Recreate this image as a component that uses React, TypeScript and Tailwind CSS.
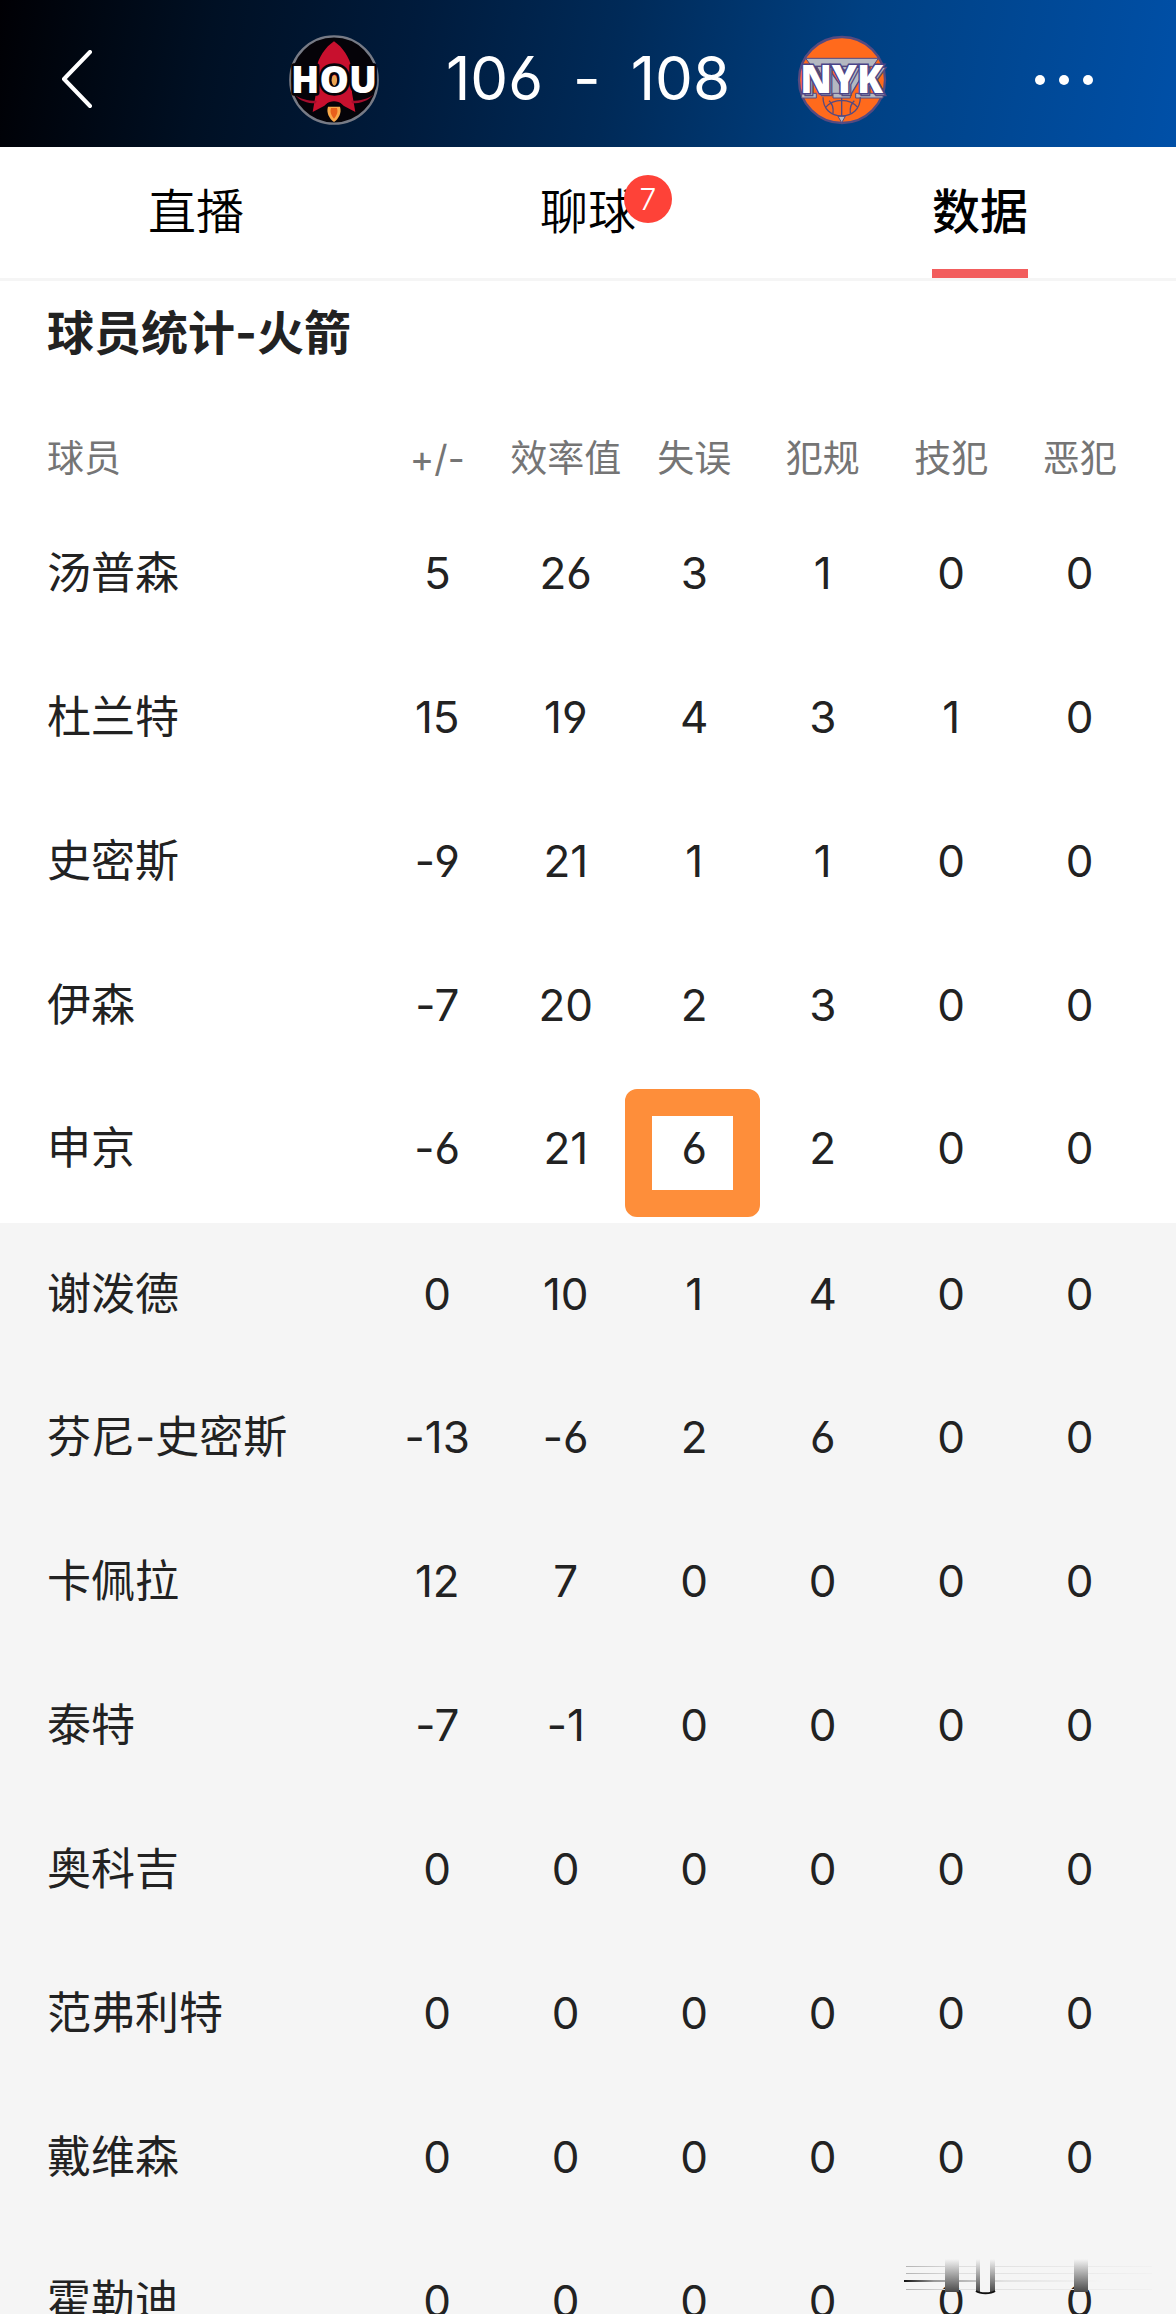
type Player = { name: string; stats: string[] };

const columns = ["+/-", "效率值", "失误", "犯规", "技犯", "恶犯"];

const starters: Player[] = [
  { name: "汤普森", stats: ["5", "26", "3", "1", "0", "0"] },
  { name: "杜兰特", stats: ["15", "19", "4", "3", "1", "0"] },
  { name: "史密斯", stats: ["-9", "21", "1", "1", "0", "0"] },
  { name: "伊森", stats: ["-7", "20", "2", "3", "0", "0"] },
  { name: "申京", stats: ["-6", "21", "6", "2", "0", "0"] },
];

const bench: Player[] = [
  { name: "谢泼德", stats: ["0", "10", "1", "4", "0", "0"] },
  { name: "芬尼-史密斯", stats: ["-13", "-6", "2", "6", "0", "0"] },
  { name: "卡佩拉", stats: ["12", "7", "0", "0", "0", "0"] },
  { name: "泰特", stats: ["-7", "-1", "0", "0", "0", "0"] },
  { name: "奥科吉", stats: ["0", "0", "0", "0", "0", "0"] },
  { name: "范弗利特", stats: ["0", "0", "0", "0", "0", "0"] },
  { name: "戴维森", stats: ["0", "0", "0", "0", "0", "0"] },
  { name: "霍勒迪", stats: ["0", "0", "0", "0", "0", "0"] },
];

function RocketsLogo() {
  return (
    <svg viewBox="54 44 276 276" className="size-[92px]" role="img" aria-label="HOU">
      <circle cx="192" cy="182" r="131" fill="#050308" stroke="#777b86" strokeWidth="7" />
      <path d="M192 66c-26 18-46 46-54 84v70l-10 58 34-18 12-10h36l12 10 34 18-10-58v-70c-8-38-28-66-54-84z" fill="#c8102e" />
      <path d="M74 226c16 12 38 18 66 18l-2 8c-28 0-48-8-64-26zM310 226c-16 12-38 18-66 18l2 8c28 0 48-8 64-26z" fill="#a50d2c" />
      <path d="M166 258c8-10 18-12 26-12s18 2 26 12z" fill="#050308" />
      <path d="M174 262h36c6 18-4 36-18 46-14-10-24-28-18-46z" fill="#f9a94a" />
      <path d="M183 266h18c4 14-2 24-9 32-7-8-13-18-9-32z" fill="#e8601c" />
      <text
        x="192"
        y="222"
        textAnchor="middle"
        fontSize="111"
        fontWeight="800"
        fill="#fff"
        stroke="#050308"
        strokeWidth="16"
        strokeLinejoin="round"
        paintOrder="stroke"
        className="font-['Open_Sans',sans-serif]"
      >
        HOU
      </text>
      <ellipse cx="193" cy="183" rx="8" ry="16" fill="#e9a653" />
    </svg>
  );
}

function KnicksLogo() {
  return (
    <svg viewBox="49 42 276 276" className="size-[92px]" role="img" aria-label="NYK">
      <circle cx="187" cy="180" r="129" fill="#ff6a1c" stroke="#554a80" strokeWidth="7" />
      <path d="M78 115h218l-16 24H96z" fill="#b4b8c1" stroke="#554a80" strokeWidth="3" />
      <path d="M110 139h154l-50 84h-56z" fill="#b4b8c1" stroke="#554a80" strokeWidth="4" />
      <path d="M150 150l36 52 36-52z" fill="#ff6a1c" stroke="#554a80" strokeWidth="4" />
      <path d="M66 220h44v14H66zM160 220h52v14h-52zM228 220h82v14h-82z" fill="#b4b8c1" stroke="#554a80" strokeWidth="3" />
      <g fill="none" stroke="#554a80" strokeWidth="4">
        <path d="M130 232c0 36 24 54 56 56 32-2 56-20 56-56" />
        <path d="M186 234v54M138 262c24-28 72-28 96 0M160 280c2-18 0-28-12-38M212 280c-2-18 0-28 12-38" />
      </g>
      <path d="M175 289h22l-11 19z" fill="#b4b8c1" stroke="#554a80" strokeWidth="3" />
      <text
        x="192"
        y="224"
        textAnchor="middle"
        fontSize="112"
        fontWeight="800"
        fill="#b4b8c1"
        stroke="#554a80"
        strokeWidth="8"
        paintOrder="stroke"
        aria-hidden="true"
        className="font-['Open_Sans',sans-serif]"
      >
        NYK
      </text>
      <text
        x="186"
        y="219"
        textAnchor="middle"
        fontSize="114"
        fontWeight="800"
        fill="#fff"
        stroke="#4a4488"
        strokeWidth="9"
        paintOrder="stroke"
        className="font-['Open_Sans',sans-serif]"
      >
        NYK
      </text>
    </svg>
  );
}

function Smudge() {
  return (
    <svg viewBox="0 0 250 38" className="absolute right-[22px] bottom-5 h-[38px] w-[250px]" aria-hidden="true">
      <defs>
        <linearGradient id="fadeDown" x1="0" y1="0" x2="0" y2="1">
          <stop offset="0" stopColor="#f5f5f5" />
          <stop offset="0.4" stopColor="#b0b0b0" />
          <stop offset="1" stopColor="#4a4a4a" />
        </linearGradient>
        <linearGradient id="fadeRight" x1="0" y1="0" x2="1" y2="0">
          <stop offset="0" stopColor="#111" />
          <stop offset="0.15" stopColor="#999" />
          <stop offset="0.5" stopColor="#e2e2e2" />
          <stop offset="1" stopColor="#f5f5f5" />
        </linearGradient>
        <linearGradient id="fadeRightSoft" x1="0" y1="0" x2="1" y2="0">
          <stop offset="0" stopColor="#b4b4b4" />
          <stop offset="0.2" stopColor="#dedede" />
          <stop offset="1" stopColor="#f1f1f1" />
        </linearGradient>
      </defs>
      <rect x="2" y="8" width="246" height="1" fill="url(#fadeRightSoft)" />
      <rect x="2" y="15" width="246" height="1" fill="url(#fadeRightSoft)" />
      <rect x="0" y="22" width="200" height="2" fill="url(#fadeRight)" />
      <rect x="2" y="31" width="246" height="1" fill="url(#fadeRightSoft)" />
      <rect x="41" y="1" width="14" height="33" fill="url(#fadeDown)" />
      <rect x="170" y="1" width="14" height="33" fill="url(#fadeDown)" />
      <rect x="72" y="1" width="4" height="33" fill="url(#fadeDown)" />
      <rect x="86" y="1" width="5" height="33" fill="url(#fadeDown)" />
      <rect x="76" y="1" width="10" height="33" fill="#f5f5f5" />
      <path d="M72 33c4 3 15 3 19 0" fill="none" stroke="#111" strokeWidth="2" />
    </svg>
  );
}

function PlayerRow({ player, marked }: { player: Player; marked?: number }) {
  return (
    <tr className="h-36">
      <th scope="row" className="pl-[47px] text-left font-normal whitespace-nowrap">
        {player.name}
      </th>
      {player.stats.map((value, i) => (
        <td key={columns[i]} className="relative text-center">
          {value}
          {marked === i && (
            <span className="absolute top-3 -left-[5px] h-32 w-[135px] rounded-xl border-[27px] border-[#fe8e3a]" />
          )}
        </td>
      ))}
      <td />
    </tr>
  );
}

export default function App() {
  return (
    <div
      lang="zh-CN"
      className="relative flex h-screen flex-col overflow-hidden bg-white pb-0.5 font-[Inter,'Noto_Sans_CJK_SC',sans-serif] text-[#222] [font-feature-settings:'cv03','cv04','calt'_0]"
    >
      <header className="grid h-[147px] shrink-0 grid-cols-[1fr_auto_1fr] items-center bg-[linear-gradient(100deg,#000004_0%,#001024_18%,#001b3c_35%,#002a58_52%,#004082_72%,#0050a8_100%)] pt-3 text-white">
        <button type="button" aria-label="返回" className="ml-[60px] w-fit">
          <svg viewBox="0 0 34 60" className="h-[60px] w-[34px]" fill="none" stroke="currentColor" strokeWidth="4" strokeLinecap="round" strokeLinejoin="round">
            <path d="M30 2 4 29l26 27" />
          </svg>
        </button>
        <div className="flex w-[600px] items-center justify-between">
          <RocketsLogo />
          <p className="flex items-center gap-[30px] pb-1 text-[60px] leading-none">
            <span>106</span>
            <span>-</span>
            <span>108</span>
          </p>
          <KnicksLogo />
        </div>
        <button type="button" aria-label="更多" className="mr-20 w-fit justify-self-end">
          <svg viewBox="0 0 64 20" className="h-5 w-16" fill="currentColor">
            <circle cx="8" cy="10" r="5" />
            <circle cx="32" cy="10" r="5" />
            <circle cx="56" cy="10" r="5" />
          </svg>
        </button>
      </header>

      <nav className="grid h-[134px] shrink-0 grid-cols-3 justify-items-center border-b-[3px] border-[#f5f5f5] text-[48px] text-black">
        <button type="button" className="pb-0.5 font-[350]">直播</button>
        <button type="button" className="relative pb-0.5 font-[350]">
          聊球
          <span className="absolute top-7 left-[84px] flex size-12 items-center justify-center rounded-full bg-[#fe4238] text-[30px] text-white">
            7
          </span>
        </button>
        <button type="button" aria-current="page" className="relative pb-0.5 font-medium">
          数据
          <span className="absolute bottom-0 left-0 h-[9px] w-full bg-[#f25d5d]" />
        </button>
      </nav>

      <main className="min-h-0 flex-1 overflow-hidden">
        <h2 className="mb-12 pt-4 pl-[47px] text-[47px] leading-[72px] font-bold">球员统计-火箭</h2>
        <table className="w-full table-fixed border-collapse text-[44px] leading-[60px]">
          <thead>
            <tr className="h-[84px] text-[37px] text-[#757575]">
              <th scope="col" className="w-[373px] pl-[47px] text-left font-normal">球员</th>
              {columns.map((label) => (
                <th key={label} scope="col" className="font-normal whitespace-nowrap">{label}</th>
              ))}
              <td className="w-8" />
            </tr>
          </thead>
          <tbody className="border-b-4 border-white">
            {starters.map((player) => (
              <PlayerRow key={player.name} player={player} marked={player.name === "申京" ? 2 : undefined} />
            ))}
          </tbody>
          <tbody className="bg-[#f5f5f5]">
            {bench.map((player) => (
              <PlayerRow key={player.name} player={player} />
            ))}
          </tbody>
        </table>
      </main>
      <Smudge />
    </div>
  );
}
